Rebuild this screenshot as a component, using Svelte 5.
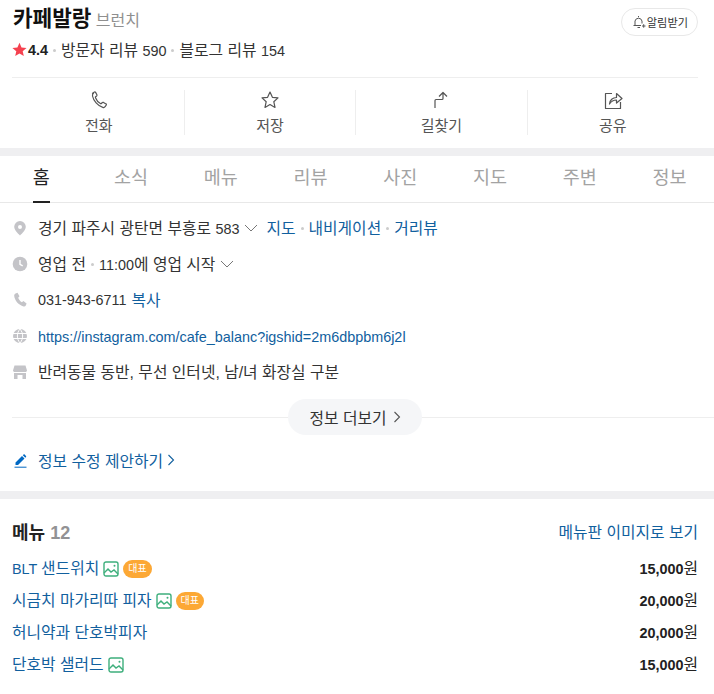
<script>
  const actions = [
    { label: '전화', icon: 'phone' },
    { label: '저장', icon: 'star' },
    { label: '길찾기', icon: 'route' },
    { label: '공유', icon: 'share' }
  ];
  const tabs = ['홈', '소식', '메뉴', '리뷰', '사진', '지도', '주변', '정보'];
  const menu = [
    { latin: 'BLT ', name: '샌드위치', photo: true, best: true, price: '15,000' },
    { name: '시금치 마가리따 피자', photo: true, best: true, price: '20,000' },
    { name: '허니약과 단호박피자', photo: false, best: false, price: '20,000' },
    { name: '단호박 샐러드', photo: true, best: false, price: '15,000' }
  ];
</script>

<div class="page">
  <section class="head">
    <div class="title-row">
      <div class="title">
        <span class="name">카페발랑</span>
        <span class="cat">브런치</span>
      </div>
      <button class="notify">
        <svg width="14" height="14" viewBox="0 0 14 14" fill="none" stroke="#555" stroke-width="1">
          <path d="M1.500 10.500h7.500M3 10.500V6a3.600 3.600 0 0 1 7 0v2.500M5.500 12.500h2.500M6.500 1v1.200" />
          <path d="M10 11h3.500M11.700 9.200v3.500" />
        </svg>
        알림받기
      </button>
    </div>
    <div class="stats">
      <svg class="star" width="15" height="15" viewBox="0 0 15 15"><path fill="#f5414f" d="M7.500.8l2 4.600 5 .5-3.800 3.300 1.100 4.900-4.300-2.600-4.300 2.600 1.100-4.900L.4 5.900l5-.5z" /></svg>
      <b class="num">4.4</b>
      <i class="dot"></i>
      <span>방문자 리뷰 <span class="num">590</span></span>
      <i class="dot"></i>
      <span>블로그 리뷰 <span class="num">154</span></span>
    </div>
    <div class="actions">
      {#each actions as a}
        <div class="action">
          <svg width="20" height="20" viewBox="0 0 20 20" fill="none" stroke="#555" stroke-width="1.200" stroke-linejoin="round">
            {#if a.icon === 'phone'}
              <path d="M3.500 3.200l2-1.200c.5-.2.900 0 1.100.4l1.300 2.400c.2.400.1.800-.2 1.100L6.600 6.700c-.3.300-.3.600-.1 1 .9 2.300 2.800 4.700 4.900 5.900.4.200.7.200 1-.1l1-1c.3-.3.700-.3 1.100-.1l2.500 1.500c.4.200.5.700.3 1.100l-1.200 1.700c-.5.700-1.400 1-2.300.7-5-1.500-9.400-6.700-10.300-11.400-.1-1 0-2.200 1-2.800z" />
            {:else if a.icon === 'star'}
              <path d="M10 2l2.400 5.300 5.600.6-4.200 3.800 1.200 5.700L10 14.500l-5 2.900 1.200-5.700L2 7.900l5.600-.6z" />
            {:else if a.icon === 'route'}
              <path d="M4 18v-7.500c0-.6.400-1 1-1h6c.6 0 1-.4 1-1V3M8 6.500L12 2.500l4 4" />
            {:else}
              <path d="M9 3.500H2.500v15h15V12" />
              <path d="M6.500 14c.2-4 3.300-6.500 7-6.500V3.500l5.500 5-5.500 4.500v-3c-2.700 0-5.200 1.200-7 4z" />
            {/if}
          </svg>
          <span>{a.label}</span>
        </div>
      {/each}
    </div>
  </section>

  <nav class="tabs">
    {#each tabs as t, i}
      <div class="tab" class:on={i === 0}><span>{t}</span></div>
    {/each}
  </nav>

  <section class="info">
    <div class="row">
      <svg class="ico" viewBox="0 0 16 16"><path fill="#c4c4c8" fill-rule="evenodd" d="M8 1a5.800 5.800 0 0 0-5.800 5.800C2.200 10.500 8 15.500 8 15.500s5.800-5 5.800-8.700A5.800 5.800 0 0 0 8 1zm0 4a2 2 0 1 1 0 4 2 2 0 0 1 0-4z" /></svg>
      <span>경기 파주시 광탄면 부흥로 <span class="num">583</span></span>
      <svg class="chev" width="14" height="14" viewBox="0 0 14 14"><path d="M1 4l6 6 6-6" fill="none" stroke="#777" /></svg>
      <a class="link gap">지도</a><i class="dot"></i><a class="link">내비게이션</a><i class="dot"></i><a class="link">거리뷰</a>
    </div>
    <div class="row">
      <svg class="ico" viewBox="0 0 16 16"><circle cx="8" cy="8" r="7.300" fill="#c4c4c8" /><path d="M8 4v4.300l2.700 1.500" fill="none" stroke="#fff" stroke-width="1.400" /></svg>
      <span>영업 전</span><i class="dot"></i><span><span class="num">11:00</span>에 영업 시작</span>
      <svg class="chev" width="14" height="14" viewBox="0 0 14 14"><path d="M1 4l6 6 6-6" fill="none" stroke="#777" /></svg>
    </div>
    <div class="row">
      <svg class="ico" viewBox="0 0 16 16"><path fill="#c4c4c8" d="M3.500 1.500l2-.7 2 3.500-1.300 1.400c.6 1.800 2 3.500 3.700 4.500l1.500-1.200 3.200 2.400-.8 2c-.4.900-1.300 1.300-2.200 1C6.500 13 2.800 8.600 2.200 4c-.1-1.100.4-2 1.300-2.500z" /></svg>
      <span class="num">031-943-6711</span>
      <a class="link copy">복사</a>
    </div>
    <div class="row">
      <svg class="ico" viewBox="0 0 16 16"><circle cx="8" cy="8" r="7" fill="#c4c4c8" /><path d="M1 5.500h14M1 10.500h14M8 1c-3.500 4-3.500 10 0 14M8 1c3.500 4 3.500 10 0 14" fill="none" stroke="#fff" /></svg>
      <a class="link num url">https://instagram.com/cafe_balanc?igshid=2m6dbpbm6j2l</a>
    </div>
    <div class="row">
      <svg class="ico" viewBox="0 0 16 16"><path fill="#c4c4c8" d="M2.500 1.500h11L15 6.500c0 .8-.8 1.500-1.700 1.500H2.700C1.800 8 1 7.300 1 6.500zM2 9h12v6h-3.500v-4h-5v4H2z" /></svg>
      <span>반려동물 동반, 무선 인터넷, 남/녀 화장실 구분</span>
    </div>
    <div class="more">
      <button class="more-btn">
        정보 더보기
        <svg width="8" height="12" viewBox="0 0 8 12"><path d="M1.500 1l5 5-5 5" fill="none" stroke="#555" stroke-width="1.100" /></svg>
      </button>
    </div>
    <div class="suggest">
      <svg width="16" height="16" viewBox="0 0 16 16"><path fill="#0068c3" d="M3.500 10.500L10 4l2.500 2.500L6 13H3.500zM10.800 3.200l.8-.7c.3-.3.7-.3 1 0l1.400 1.400c.3.300.3.700 0 1l-.7.800z" /><path d="M2.500 15.200h12" stroke="#0068c3" /></svg>
      <a class="link">정보 수정 제안하기</a>
      <svg width="8" height="12" viewBox="0 0 8 12"><path d="M1.500 1l5 5-5 5" fill="none" stroke="#11609e" stroke-width="1.100" /></svg>
    </div>
  </section>

  <section class="menu">
    <div class="menu-head">
      <h2>메뉴 <em>12</em></h2>
      <a class="link">메뉴판 이미지로 보기</a>
    </div>
    {#each menu as m}
      <div class="item">
        <a class="link item-name">{#if m.latin}<span class="num">{m.latin}</span>{/if}{m.name}</a>
        {#if m.photo}
          <svg class="pic" width="16" height="16" viewBox="0 0 16 16" fill="none" stroke="#3eaf7c" stroke-width="1.400"><rect x="1" y="1" width="14" height="14" rx="2" /><path d="M1 12l4-4 3 3 3-2 4 4" /><circle cx="11.500" cy="4.800" r="1" fill="#3eaf7c" stroke="none" /></svg>
        {/if}
        {#if m.best}
          <span class="best">대표</span>
        {/if}
        <span class="price"><b class="num">{m.price}</b>원</span>
      </div>
    {/each}
  </section>
</div>

<style>
  :global(body) {
    background: #fff;
    font-family: "Liberation Sans", "Noto Sans CJK KR", sans-serif;
    color: #333;
  }

  a { text-decoration: none; }
  button { font-family: inherit; cursor: pointer; }

  .page {
    width: 714px;
    height: 694px;
    overflow: hidden;
  }

  .link { color: #11609e; }
  .num { font-size: 14.4px; }

  .dot {
    width: 3px;
    height: 3px;
    margin: 1px 5px 0;
    border-radius: 50%;
    background: #ccc;
    flex: none;
  }

  .head {
    padding: 0 16px 0 12px;
    height: 148px;
    box-sizing: border-box;
  }

  .title-row {
    height: 37px;
    display: flex;
    justify-content: space-between;
    align-items: center;
  }

  .title {
    margin: -4px 0 0 1px;
  }

  .name {
    font-size: 21.300px;
    font-weight: 700;
    color: #111;
  }

  .cat {
    font-size: 16px;
    color: #8f8f8f;
  }

  .notify {
    display: flex;
    align-items: center;
    gap: 1px;
    height: 28px;
    margin-top: 6px;
    padding: 0 9px 0 10px;
    border: 1px solid #e8e8e8;
    border-radius: 14px;
    background: #fff;
    font-size: 11.200px;
    color: #333;
  }

  .stats {
    display: flex;
    align-items: center;
    height: 25px;
    font-size: 15.800px;
    color: #333;
  }

  .star { margin-right: 1px; }

  .stats b { color: #222; }

  .actions {
    display: flex;
    margin-top: 15px;
    padding: 12px 0 0 1.500px;
    border-top: 1px solid #eee;
  }

  .action {
    flex: 1;
    height: 45px;
    display: flex;
    flex-direction: column;
    align-items: center;
    gap: 4px;
    font-size: 15px;
    color: #555;
    border-left: 1px solid #eee;
  }

  .action:first-child { border-left: 0; }

  .tabs {
    display: flex;
    width: 718px;
    margin-left: -3.500px;
    box-sizing: border-box;
    border-top: 8px solid #efeff1;
    border-bottom: 1px solid #e8e8e8;
    height: 55px;
  }

  .tab {
    flex: 1;
    display: flex;
    justify-content: center;
    font-size: 18.500px;
    color: #a3a3a3;
  }

  .tab span {
    height: 47px;
    line-height: 43px;
    box-sizing: border-box;
  }

  .tab.on span {
    color: #222;
    border-bottom: 2px solid #222;
  }

  .info {
    padding: 7px 16px 0 12px;
    border-bottom: 8px solid #efeff1;
    height: 281px;
    font-size: 15.800px;
  }

  .row {
    display: flex;
    align-items: center;
    height: 36px;
  }

  .row > span,
  .row > a {
    margin-bottom: 2px;
  }

  .row > .num { margin-bottom: 0; }
  .row > .url { margin-top: 1px; }

  .ico {
    width: 16px;
    height: 16px;
    margin-right: 10px;
    flex: none;
  }

  .chev { margin-left: 5px; }
  .row > .gap { margin-left: 8px; }
  .row > .copy { margin-left: 5px; }

  .more {
    margin-top: 9px;
    display: flex;
    justify-content: center;
    position: relative;
    height: 36px;
    align-items: center;
    margin-right: -16px;
    padding-right: 16px;
  }

  .more::before {
    content: "";
    position: absolute;
    left: 0;
    right: 0;
    top: 18px;
    border-top: 1px solid #eee;
  }

  .more-btn {
    position: relative;
    display: flex;
    align-items: center;
    gap: 6px;
    height: 36px;
    padding: 0 21px;
    border: 0;
    border-radius: 18px;
    background: #f5f6f8;
    font-size: 15.800px;
    color: #333;
  }

  .suggest {
    display: flex;
    align-items: center;
    gap: 4px;
    margin-top: 7px;
    height: 36px;
  }

  .suggest a { margin-left: 6px; }

  .menu {
    padding: 0 16px 0 12px;
  }

  .menu-head {
    display: flex;
    justify-content: space-between;
    align-items: center;
    box-sizing: border-box;
    height: 54px;
    padding-top: 10px;
    font-size: 15.800px;
  }

  h2 {
    margin: 0;
    font-size: 18px;
    font-weight: 700;
    color: #222;
  }

  h2 em {
    font-style: normal;
    color: #929294;
  }

  .item {
    display: flex;
    align-items: center;
    height: 32px;
    font-size: 15.800px;
  }

  .item-name { margin-bottom: 3px; }

  .pic { margin-left: 4px; }

  .best {
    margin-left: 4px;
    height: 18px;
    line-height: 18px;
    padding: 0 5px;
    border-radius: 9px;
    background: #fca835;
    color: #fff;
    font-size: 10px;
  }

  .price {
    margin-left: auto;
    margin-bottom: 3px;
    color: #222;
  }
</style>
